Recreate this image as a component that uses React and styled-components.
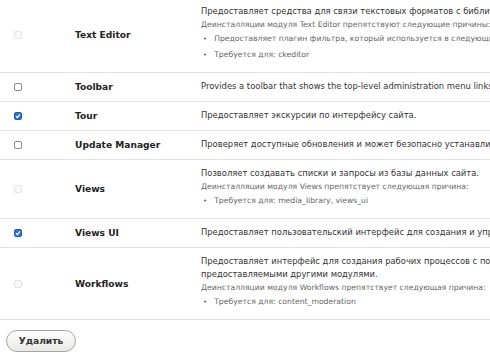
import { createGlobalStyle, styled } from "styled-components";

const GlobalStyle = createGlobalStyle`
  html, body {
    margin: 0;
    padding: 0;
    background: #fff;
    overflow: hidden;
  }
  body {
    font-family: "DejaVu Sans", "Liberation Sans", sans-serif;
    color: #333;
  }
`;

const Page = styled.div`
  width: 760px;
  margin-top: -2px;
`;

const Table = styled.table`
  width: 100%;
  border-collapse: collapse;
  table-layout: fixed;
`;

const Row = styled.tr`
  border-bottom: 1px solid #e3e3e1;
`;

const CheckCell = styled.td`
  width: 61px;
  padding: 0 0 0 14px;
  vertical-align: middle;
`;

const NameCell = styled.td`
  width: 126px;
  padding: 0;
  vertical-align: middle;
  font-weight: bold;
  font-size: 9.1px;
  color: #222;
`;

const DescCell = styled.td`
  padding: 7px 0 8px;
  vertical-align: middle;
  font-size: 8.4px;
  line-height: 13px;
  white-space: nowrap;
  overflow: hidden;
`;

const Box = styled.span`
  display: block;
  width: 8px;
  height: 8px;
  border-radius: 2px;
  box-sizing: border-box;
  border: 1px solid ${(p) => (p.$checked ? "#1d5fb4" : p.$disabled ? "#e4e4e4" : "#8a8a8a")};
  background: ${(p) => (p.$checked ? "#2a74cc" : p.$disabled ? "#f8f8f8" : "#fff")};
  position: relative;
`;

const Tick = styled.svg`
  position: absolute;
  left: 0;
  top: 0;
`;

const Note = styled.div`
  font-size: 7.7px;
  color: #666;
  line-height: 14px;
`;

const Reasons = styled.ul`
  margin: 0 0 2px;
  padding: 0 0 0 2px;
  list-style: none;
`;

const Reason = styled.li`
  font-size: 7.7px;
  color: #666;
  line-height: 13px;
  & + & {
    margin-top: 2px;
  }
  &::before {
    content: "•";
    margin-right: 7px;
    font-size: 7px;
  }
`;

const Footer = styled.div`
  padding: 9px 0 0 6px;
`;

const Button = styled.button`
  width: 70px;
  height: 22px;
  border: 1px solid #a6a6a6;
  border-radius: 11px;
  background: linear-gradient(#fefefe, #e8e8e4);
  font-family: "DejaVu Sans", sans-serif;
  font-weight: bold;
  font-size: 9.1px;
  color: #333;
  padding: 0;
`;

const Checkbox = ({ checked, disabled }) => (
  <Box $checked={checked} $disabled={disabled}>
    {checked && (
      <Tick width="6" height="6" viewBox="0 0 6 6">
        <path d="M1 3.2 L2.4 4.6 L5 1.4" stroke="#fff" strokeWidth="1.3" fill="none" />
      </Tick>
    )}
  </Box>
);

const modules = [
  {
    name: "Text Editor",
    disabled: true,
    desc: ["Предоставляет средства для связи текстовых форматов с библиотеками редакторов текста."],
    note: "Деинсталляции модуля Text Editor препятствуют следующие причины:",
    reasons: [
      "Предоставляет плагин фильтра, который используется в следующих форматах: Basic HTML",
      "Требуется для: ckeditor",
    ],
  },
  {
    name: "Toolbar",
    desc: ["Provides a toolbar that shows the top-level administration menu links and links from other modules."],
  },
  { name: "Tour", checked: true, desc: ["Предоставляет экскурсии по интерфейсу сайта."] },
  {
    name: "Update Manager",
    desc: ["Проверяет доступные обновления и может безопасно устанавливать или обновлять модули."],
  },
  {
    name: "Views",
    disabled: true,
    desc: ["Позволяет создавать списки и запросы из базы данных сайта."],
    note: "Деинсталляции модуля Views препятствует следующая причина:",
    reasons: ["Требуется для: media_library, views_ui"],
  },
  {
    name: "Views UI",
    checked: true,
    desc: ["Предоставляет пользовательский интерфейс для создания и управления представлениями."],
  },
  {
    name: "Workflows",
    disabled: true,
    desc: [
      "Предоставляет интерфейс для создания рабочих процессов с пользовательскими состояниями,",
      "предоставляемыми другими модулями.",
    ],
    note: "Деинсталляции модуля Workflows препятствует следующая причина:",
    reasons: ["Требуется для: content_moderation"],
  },
];

const App = () => {
  return (
    <Page>
      <GlobalStyle />
      <Table>
        <tbody>
          {modules.map((m) => (
            <Row key={m.name}>
              <CheckCell>
                <Checkbox checked={m.checked} disabled={m.disabled} />
              </CheckCell>
              <NameCell>{m.name}</NameCell>
              <DescCell>
                {m.desc.map((line) => (
                  <div key={line}>{line}</div>
                ))}
                {m.note && <Note>{m.note}</Note>}
                {m.reasons && (
                  <Reasons>
                    {m.reasons.map((r) => (
                      <Reason key={r}>{r}</Reason>
                    ))}
                  </Reasons>
                )}
              </DescCell>
            </Row>
          ))}
        </tbody>
      </Table>
      <Footer>
        <Button>Удалить</Button>
      </Footer>
    </Page>
  );
};

export default App;
